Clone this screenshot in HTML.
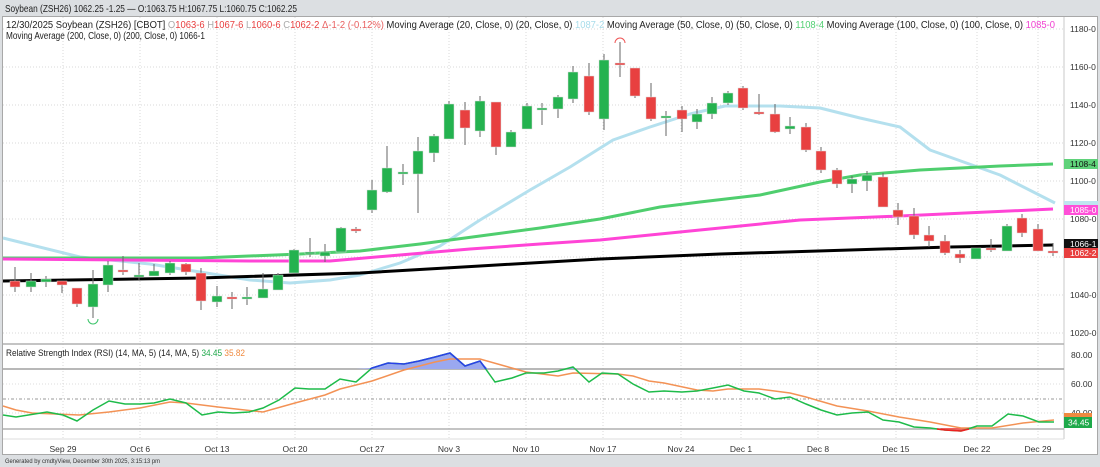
<!DOCTYPE html>
<html><head><meta charset="utf-8"><style>
html,body{margin:0;padding:0;background:#dcdfe2;width:1100px;height:467px;overflow:hidden}
svg{display:block;font-family:"Liberation Sans",sans-serif}
</style></head><body>
<svg id="s" width="1100" height="467" xmlns="http://www.w3.org/2000/svg">
<rect x="0" y="0" width="1100" height="467" fill="#dcdfe2"/>
<text x="5" y="12" font-size="10.5" fill="#222" textLength="292" lengthAdjust="spacingAndGlyphs">Soybean (ZSH26) 1062.25 -1.25 — O:1063.75 H:1067.75 L:1060.75 C:1062.25</text>
<rect x="2.5" y="16.5" width="1095" height="438" fill="#fff" stroke="#a8a8a8"/>
<g id="grid" stroke="#d8d8d8" stroke-dasharray="1,2" stroke-width="1"></g>
<line x1="1064" y1="17" x2="1064" y2="439" stroke="#c8c8c8"/>
<g id="ma"></g>
<g id="candles"></g>
<path d="M88,319 a5,5 0 0 0 10,0" fill="none" stroke="#3cc46a" stroke-width="1"/>
<path d="M615,43 a5,5 0 0 1 10,0" fill="none" stroke="#ee5555" stroke-width="1"/>
<text x="6" y="28" font-size="10" fill="#222" textLength="1049" lengthAdjust="spacingAndGlyphs">12/30/2025  Soybean (ZSH26) [CBOT] <tspan fill="#aaa">O</tspan><tspan fill="#e84040">1063-6 </tspan><tspan fill="#aaa">H</tspan><tspan fill="#e84040">1067-6 </tspan><tspan fill="#aaa">L</tspan><tspan fill="#e84040">1060-6 </tspan><tspan fill="#aaa">C</tspan><tspan fill="#e84040">1062-2 </tspan><tspan fill="#e86060">Δ-1-2 (-0.12%)</tspan> Moving Average (20, Close, 0)  (20, Close, 0) <tspan fill="#a8dcea">1087-2</tspan> Moving Average (50, Close, 0)  (50, Close, 0) <tspan fill="#52cf72">1108-4</tspan> Moving Average (100, Close, 0)  (100, Close, 0) <tspan fill="#f040d0">1085-0</tspan></text>
<text x="6" y="39" font-size="10" fill="#222" textLength="199" lengthAdjust="spacingAndGlyphs">Moving Average (200, Close, 0)  (200, Close, 0)  1066-1</text>
<g font-size="8.5" fill="#333" id="axis"></g>
<rect x="1064" y="159" width="34" height="10" fill="#5fd27a"/><text x="1070" y="167" font-size="8.5" fill="#111">1108-4</text>
<rect x="1064" y="201" width="34" height="5" fill="#bfe6f0"/>
<rect x="1064" y="205" width="34" height="10" fill="#ff4fd8"/><text x="1070" y="213" font-size="8.5" fill="#fff">1085-0</text>
<rect x="1064" y="239" width="34" height="10" fill="#111"/><text x="1070" y="247" font-size="8.5" fill="#fff">1066-1</text>
<rect x="1064" y="248" width="34" height="10" fill="#e84040"/><text x="1070" y="256" font-size="8.5" fill="#fff">1062-2</text>
<line x1="3" y1="344" x2="1064" y2="344" stroke="#b0b0b0" stroke-width="1.5"/>
<line x1="3" y1="369" x2="1064" y2="369" stroke="#a0a0a0" stroke-width="1.5"/>
<line x1="3" y1="429" x2="1064" y2="429" stroke="#b0b0b0" stroke-width="1.5"/>
<line x1="3" y1="399" x2="1064" y2="399" stroke="#999" stroke-dasharray="3,2,1,2"/>
<line x1="3" y1="384" x2="1064" y2="384" stroke="#ddd" stroke-dasharray="1,2"/>
<line x1="3" y1="413" x2="1064" y2="413" stroke="#ddd" stroke-dasharray="1,2"/>
<line x1="3" y1="439" x2="1064" y2="439" stroke="#ddd"/>
<path d="M356,369 L372,368 L388,363 L404,364 L419,361 L435,357 L450,353 L465,366 L480,361 L488,369 Z" fill="#9aa8f0"/>
<path d="M568,369 L573,367 L576,369 Z" fill="#9aa8f0"/>
<path d="M940,428 L945,430 L961,431 L968,428 Z" fill="#f06060"/>
<g id="rsi"></g>
<text x="6" y="356" font-size="9.5" fill="#222" textLength="239" lengthAdjust="spacingAndGlyphs">Relative Strength Index (RSI) (14, MA, 5)  (14, MA, 5)  <tspan fill="#1ea94a">34.45</tspan> <tspan fill="#f08a40">35.82</tspan></text>
<text x="1071" y="358" font-size="8.5" fill="#333">80.00</text>
<text x="1071" y="387" font-size="8.5" fill="#333">60.00</text>
<text x="1071" y="416" font-size="8.5" fill="#333">40.00</text>
<rect x="1064" y="413" width="28" height="4" fill="#f08a40"/>
<rect x="1064" y="417" width="28" height="11" fill="#1ea94a"/><text x="1068" y="425.5" font-size="8.5" fill="#fff">34.45</text>
<g font-size="8.5" fill="#333" text-anchor="middle" id="dates"></g>
<text x="5" y="463" font-size="6.5" fill="#333" textLength="155" lengthAdjust="spacingAndGlyphs">Generated by cmdtyView, December 30th 2025, 3:15:13 pm</text>
</svg>
<script>
var NS="http://www.w3.org/2000/svg";
function el(p,t,a){var e=document.createElementNS(NS,t);for(var k in a)e.setAttribute(k,a[k]);document.getElementById(p).appendChild(e);return e;}
var dx=[63,140,217,295,372,449,526,603,681,741,818,896,977,1038];
var dl=["Sep 29","Oct 6","Oct 13","Oct 20","Oct 27","Nov 3","Nov 10","Nov 17","Nov 24","Dec 1","Dec 8","Dec 15","Dec 22","Dec 29"];
dx.forEach(function(x,i){el("grid","line",{x1:x,y1:17,x2:x,y2:439});var t=el("dates","text",{x:x,y:452});t.textContent=dl[i];});
var pl=[1180,1160,1140,1120,1100,1080,1060,1040,1020];
pl.forEach(function(p){var y=29+(1180-p)*1.9;el("grid","line",{x1:3,y1:y,x2:1064,y2:y});if(p!=1060){var t=el("axis","text",{x:1070,y:y+3});t.textContent=p+"-0";}});
function pline(pts,c,w){el("ma","polyline",{points:pts,fill:"none",stroke:c,"stroke-width":w,"stroke-linejoin":"round"});}
pline("3,238 80,257 150,264 200,272 250,280 290,283 330,280 360,275 400,263 440,246 480,220 530,190 570,167 613,140 650,127 690,114 725,106 780,106 820,108 860,118 900,127 930,150 1000,175 1055,203","#b4e0ee",3);
pline("3,258 200,258 300,254 360,251 420,244 480,236 540,228 600,219 660,207 700,202 760,195 820,182 860,175 920,170 1000,166 1053,164","#4fce6e",3);
pline("3,259 250,261 330,261 400,255 470,249 540,244 600,240 700,230 800,220 900,216 1053,209","#ff44d6",3);
pline("3,281 200,278 360,273 480,266 600,259 720,254 850,250 950,247 1053,245","#000",3);
var C=[[15,267,281,287,292,'r'],[31,273,281,287,292,'g'],[46,276,279,282,287,'g'],[62,281,281,285,293,'r'],[77,288,288,304,307,'r'],[93,270,284,307,318,'g'],[108,261,265,285,292,'g'],[123,256,270,272,275,'r'],[139,263,275,277,280,'g'],[154,264,271,276,276,'g'],[170,261,263,273,275,'g'],[186,263,264,272,275,'r'],[201,268,273,301,310,'r'],[217,286,296,302,307,'g'],[232,292,297,298,309,'r'],[247,287,297,298,305,'g'],[263,273,289,298,298,'g'],[278,273,275,290,290,'g'],[294,249,250,273,273,'g'],[310,238,252,253,257,'g'],[325,244,252,256,262,'g'],[341,227,228,252,252,'g'],[356,227,229,231,233,'r'],
[372,180,190,210,213,'g'],[387,146,168,192,193,'g'],[403,164,172,173,185,'g'],[418,137,151,174,213,'g'],[434,134,136,153,162,'g'],[449,101,104,139,139,'g'],[465,102,110,128,145,'r'],[480,96,101,131,137,'g'],[496,102,102,147,155,'r'],[511,130,132,147,147,'g'],[527,103,106,129,129,'g'],[542,103,108,109,125,'g'],[558,95,97,109,118,'g'],[573,66,72,99,103,'g'],[589,63,76,112,115,'r'],[604,54,60,119,130,'g'],[620,42,63,65,77,'r'],[635,68,68,96,98,'r'],[651,83,97,119,121,'r'],[666,111,116,118,136,'g'],[682,106,110,119,132,'r'],[697,109,114,122,129,'g'],[712,97,103,114,119,'g'],[728,91,93,103,105,'g'],[743,86,88,108,110,'r'],[759,94,112,114,115,'r'],[775,104,114,132,133,'r'],[790,117,126,129,134,'g'],[806,123,127,150,152,'r'],[821,147,151,170,173,'r'],[837,168,170,184,188,'r'],[852,176,179,184,193,'g'],[867,171,175,181,191,'g'],[883,173,177,207,207,'r'],[898,203,210,217,225,'r'],[914,208,216,235,239,'r'],[929,226,235,241,247,'r'],[945,235,241,253,255,'r'],[960,250,254,258,263,'r'],[976,248,248,259,259,'g'],[991,239,248,250,252,'r'],[1007,224,226,251,251,'g'],[1022,214,218,233,237,'r'],[1038,224,229,251,251,'r'],[1053,243,251,253,256,'r']];
C.forEach(function(c){var col=c[5]=='g'?'#24b24f':'#e84040';
el("candles","line",{x1:c[0],y1:c[1],x2:c[0],y2:c[4],stroke:"#666","stroke-width":1});
var h=Math.max(c[3]-c[2],2);el("candles","rect",{x:c[0]-5,y:c[2],width:10,height:h,fill:col,stroke:"#ddd","stroke-width":0.5});});
el("rsi","polyline",{points:"3,406 16,410 32,413 79,415 109,412 140,408 170,402 186,403 218,407 263,412 295,403 325,395 340,389 372,381 404,370 435,362 450,359 480,359 526,372 558,376 573,373 618,374 633,376 649,381 664,383 697,390 713,391 728,389 759,389 790,393 806,397 837,406 868,411 899,417 930,422 961,428 992,428 1023,423 1054,420",fill:"none",stroke:"#f39255","stroke-width":1.5});
el("rsi","polyline",{points:"3,415 16,417 47,412 63,415 77,421 93,410 109,401 125,404 140,404 154,403 170,399 186,403 202,415 218,412 233,413 249,412 263,408 279,400 295,388 309,389 325,389 340,379 356,382 372,368 388,363 404,364 419,361 435,357 450,353 465,366 480,361 495,382 512,378 526,373 544,373 558,371 573,367 589,382 602,373 618,374 633,384 649,392 664,391 682,392 697,391 713,388 728,385 744,391 759,393 775,399 790,397 806,404 821,410 837,415 852,413 868,412 883,420 899,422 914,427 930,428 945,430 961,431 971,428 977,426 992,426 1008,414 1023,416 1039,422 1054,422",fill:"none",stroke:"#1ebb4a","stroke-width":1.5});
el("rsi","polyline",{points:"370,369 372,368 388,363 404,364 419,361 435,357 450,353 465,366 480,361 486,369",fill:"none",stroke:"#2a40e8","stroke-width":1.5});
el("rsi","polyline",{points:"937,429 945,430 961,431 969,429",fill:"none",stroke:"#ee2020","stroke-width":1.5});
</script>
</body></html>
